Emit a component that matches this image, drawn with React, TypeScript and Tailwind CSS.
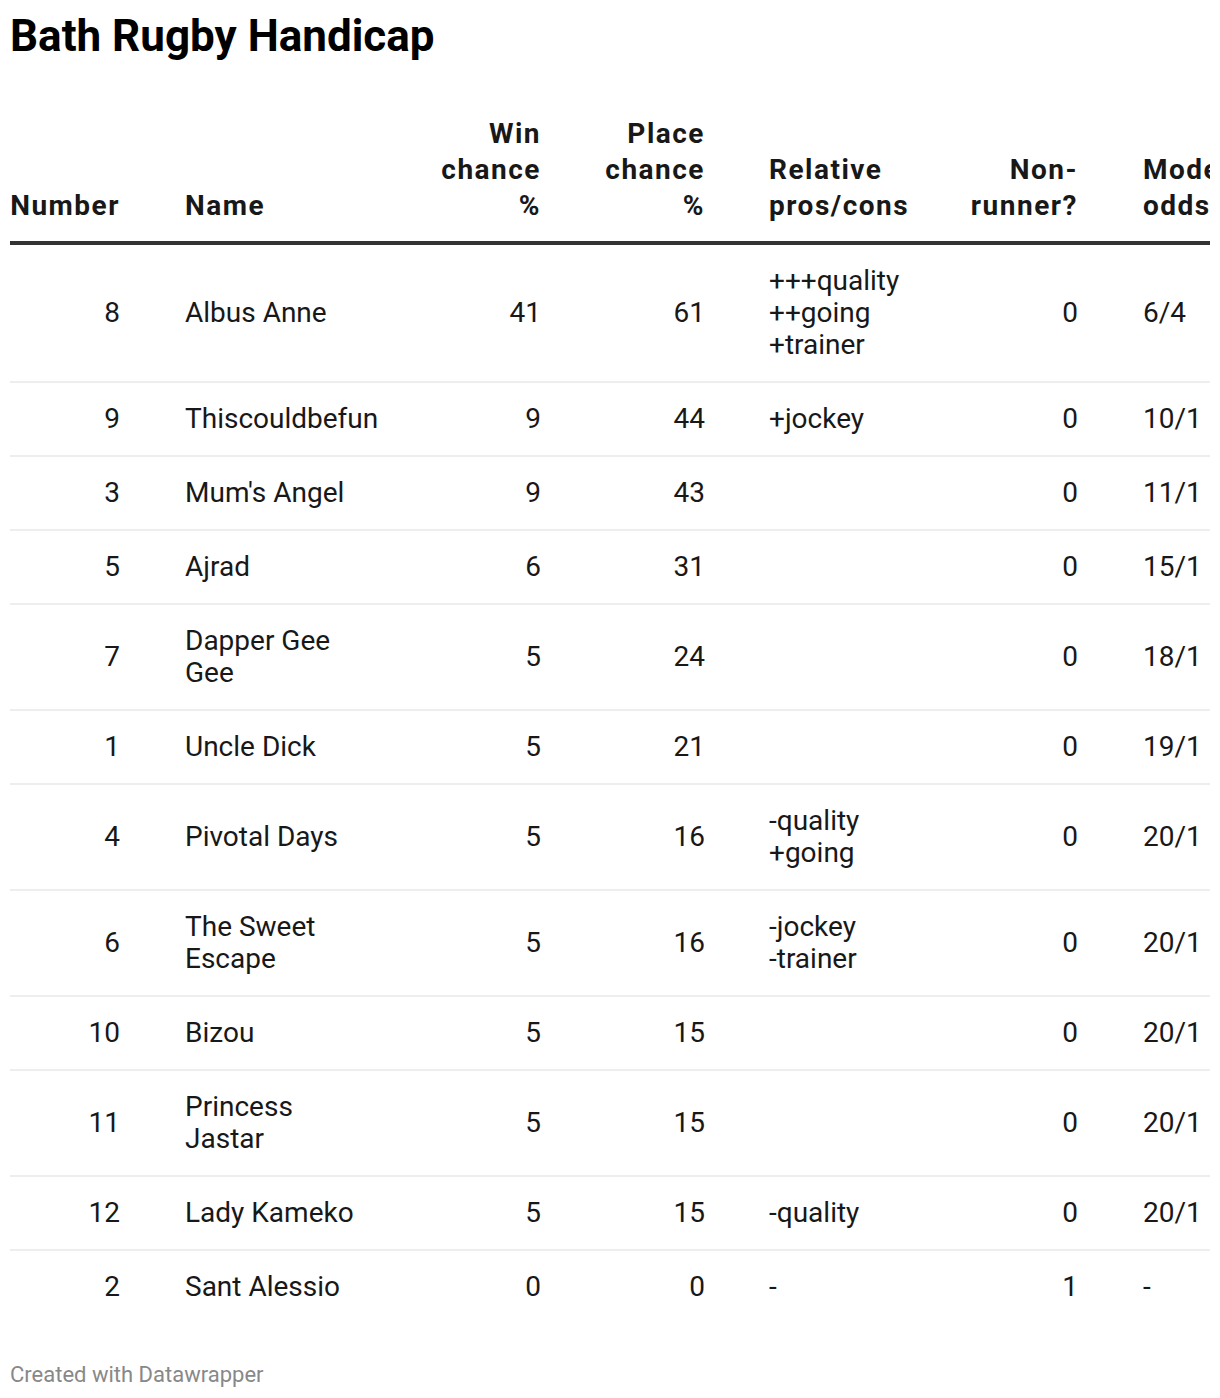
const cols = [
  { w: "w-[130px]", cls: "text-right pl-0 pr-[20px]", head: "pr-[18.5px]" },
  { w: "w-[260px]", cls: "text-left pl-[45px] pr-[30px]", head: "" },
  { w: "w-[161px]", cls: "text-right pl-[20px] pr-[20px]", head: "pr-[18.5px]" },
  { w: "w-[164px]", cls: "text-right pl-[20px] pr-[20px]", head: "pr-[18.5px]" },
  { w: "w-[225px]", cls: "text-left pl-[44px] pr-[20px]", head: "" },
  { w: "w-[148px]", cls: "text-right pl-[20px] pr-[20px]", head: "pr-[18.5px]" },
  { w: "w-[140px]", cls: "text-left pl-[45px] pr-[20px]", head: "" },
];

const headers = ["Number", "Name", "Win chance %", "Place chance %", "Relative pros/cons", "Non-runner?", "Model odds"];

type Row = [string, string, string, string, string[], string, string];

const rows: Row[] = [
  ["8", "Albus Anne", "41", "61", ["+++quality", "++going", "+trainer"], "0", "6/4"],
  ["9", "Thiscouldbefun", "9", "44", ["+jockey"], "0", "10/1"],
  ["3", "Mum's Angel", "9", "43", [], "0", "11/1"],
  ["5", "Ajrad", "6", "31", [], "0", "15/1"],
  ["7", "Dapper Gee Gee", "5", "24", [], "0", "18/1"],
  ["1", "Uncle Dick", "5", "21", [], "0", "19/1"],
  ["4", "Pivotal Days", "5", "16", ["-quality", "+going"], "0", "20/1"],
  ["6", "The Sweet Escape", "5", "16", ["-jockey", "-trainer"], "0", "20/1"],
  ["10", "Bizou", "5", "15", [], "0", "20/1"],
  ["11", "Princess Jastar", "5", "15", [], "0", "20/1"],
  ["12", "Lady Kameko", "5", "15", ["-quality"], "0", "20/1"],
  ["2", "Sant Alessio", "0", "0", ["-"], "1", "-"],
];

const App = () => {
  return (
    <div className="w-[1220px] bg-white font-['Roboto',sans-serif] text-[#181818] px-[10px] pt-[10px] pb-[11px]">
      <h1 className="text-[44px] leading-[52px] font-bold text-black">Bath Rugby Handicap</h1>

      <div className="w-[1200px] overflow-hidden mt-[54px]">
        <table className="table-fixed border-collapse w-[1228px]">
          <colgroup>
            {cols.map((c, i) => (
              <col key={i} className={c.w} />
            ))}
          </colgroup>
          <thead>
            <tr className="border-b-4 border-[#333333]">
              {headers.map((h, i) => (
                <th key={h} className={`${cols[i].cls} ${cols[i].head} align-bottom pt-0 pb-[17px] text-[28px] leading-[36px] font-bold tracking-[1.5px]`}>
                  {h}
                </th>
              ))}
            </tr>
          </thead>
          <tbody>
            {rows.map((r, ri) => (
              <tr key={r[0]} className={ri < rows.length - 1 ? "border-b-2 border-[#eeeeee]" : ""}>
                {r.map((cell, ci) => (
                  <td key={ci} className={`${cols[ci].cls} align-middle py-[20px] text-[28px] leading-[32px] font-normal`}>
                    {Array.isArray(cell) ? cell.map((l) => <div key={l}>{l}</div>) : cell}
                  </td>
                ))}
              </tr>
            ))}
          </tbody>
        </table>
      </div>

      <p className="mt-[39px] text-[22px] leading-[26px] text-[#888888]">Created with Datawrapper</p>
    </div>
  );
};

export default App;
